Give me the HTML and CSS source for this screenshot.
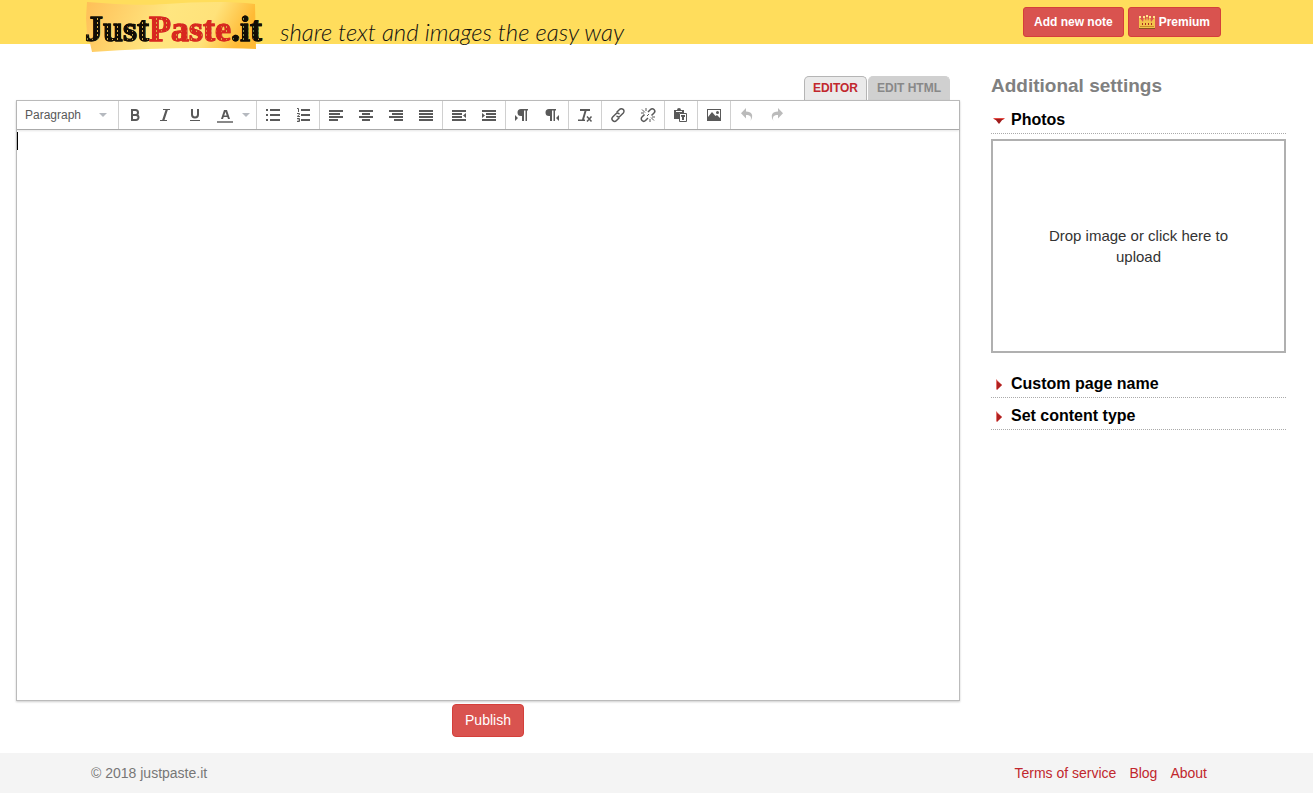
FILE: index.html
```html
<!DOCTYPE html>
<html lang="en">

<head>
    <meta charset="UTF-8">
    <meta name="viewport" content="width=device-width, initial-scale=1.0">
    <title>JustPaste.it</title>
    <link rel="stylesheet" href="styles.css">
</head>

<body>
    <header class="top">
        <div class="container top-inner">
            <a href="#" class="logo">
                <svg class="logo-paper" viewBox="0 0 170 50" aria-hidden="true">
                    <defs>
                        <linearGradient id="paper" x1="0" x2="1" y1="0" y2="0.15">
                            <stop offset="0" stop-color="#ffbf57" />
                            <stop offset="0.5" stop-color="#ffe680" />
                            <stop offset="0.78" stop-color="#ffe27a" />
                            <stop offset="1" stop-color="#ffba35" />
                        </linearGradient>
                    </defs>
                    <path fill="url(#paper)" d="M1 0C30 2 50 4 80 2C110 0 140-1 169 2L170 47C120 45 60 46 6 50L4 41L1 32L0 16Z" />
                </svg>
                <span class="logo-text"><span class="logo-black">Just</span><span class="logo-red">Paste</span><span class="logo-black">.it</span></span>
            </a>
            <span class="tagline">share text and images the easy way</span>
            <nav class="top-buttons">
                <button type="button" class="btn btn-small">Add new note</button>
                <button type="button" class="btn btn-small">
                    <svg width="16" height="14" viewBox="0 0 16 14" aria-hidden="true">
                        <path fill="#f3c34c" d="M0 13V2L4 7L5 2L7 6L8 1L9 6L11 2L12 7L16 2V13Z" />
                        <path fill="#ffe58b" d="M0 1h2v2H0zM4 1h2v2H4zM7 0h2v2H7zM10 1h2v2h-2zM14 1h2v2h-2z" />
                        <path fill="#a92c22" d="M3 8h1v2H3zM6 8h1v2H6zM9 8h1v2H9zM12 8h1v2h-1z" />
                        <path fill="#c98a2b" d="M1 11h14v1H1z" />
                        <path fill="#8a541c" d="M0 13h16v1H0z" />
                    </svg>
                    Premium
                </button>
            </nav>
        </div>
    </header>

    <main class="page">
        <section class="editor-col">
            <div class="tabs">
                <button type="button" class="tab active">EDITOR</button>
                <button type="button" class="tab">EDIT HTML</button>
            </div>

            <div class="editor">
                <div class="toolbar">
                    <div class="group format">
                        <select aria-label="Format">
                            <option>Paragraph</option>
                            <option>Heading 1</option>
                            <option>Heading 2</option>
                        </select>
                        <span class="caret"></span>
                    </div>
                    <div class="group">
                        <button type="button" aria-label="Bold">
                            <svg viewBox="0 0 16 16"><path fill="none" stroke="currentColor" stroke-width="2" d="M5 3h3.500a2.500 2.500 0 0 1 0 5H5zM5 8h4a2.500 2.500 0 0 1 0 5H5z" /></svg>
                        </button>
                        <button type="button" aria-label="Italic">
                            <svg viewBox="0 0 16 16"><path d="M6 2h7v1h-2.200L7.500 13H10v1H3v-1h2.200L8.500 3H6z" /></svg>
                        </button>
                        <button type="button" aria-label="Underline">
                            <svg viewBox="0 0 16 16"><path fill="none" stroke="currentColor" stroke-width="2" d="M5 2v5.500a3 3 0 0 0 6 0V2" /><path d="M3 13h10v1H3z" /></svg>
                        </button>
                        <button type="button" aria-label="Text color">
                            <svg viewBox="0 0 16 16"><path fill-rule="evenodd" d="M7 3h3l3 9h-2l-.7-2H6.700L6 12H4zM7.200 8.500h2.500L8.500 4.800z" /><path fill="#888" d="M0 14h16v2H0z" /></svg>
                        </button>
                        <button type="button" class="open" aria-label="Choose color"><span class="caret"></span></button>
                    </div>
                    <div class="group">
                        <button type="button" aria-label="Bullet list">
                            <svg viewBox="0 0 16 16"><path d="M1 2h2v2H1zM1 7h2v2H1zM1 12h2v2H1zM5 2h10v2H5zM5 7h10v2H5zM5 12h10v2H5z" /></svg>
                        </button>
                        <button type="button" aria-label="Numbered list">
                            <svg viewBox="0 0 16 16"><path d="M6 2h9v2H6zM6 7h9v2H6zM6 12h9v2H6z" /><path fill="none" stroke="currentColor" d="M2 1.500h1.500V5M2 6.500h2.500v1L2.500 9v.5H5M2 11.500h2.500v3H2M2.500 13h2" /></svg>
                        </button>
                    </div>
                    <div class="group">
                        <button type="button" aria-label="Align left">
                            <svg viewBox="0 0 16 16"><path d="M1 3h14v2H1zM1 6h11v2H1zM1 9h14v2H1zM1 12h9v2H1z" /></svg>
                        </button>
                        <button type="button" aria-label="Align center">
                            <svg viewBox="0 0 16 16"><path d="M1 3h14v2H1zM4 6h8v2H4zM1 9h14v2H1zM4 12h8v2H4z" /></svg>
                        </button>
                        <button type="button" aria-label="Align right">
                            <svg viewBox="0 0 16 16"><path d="M1 3h14v2H1zM4 6h11v2H4zM1 9h14v2H1zM6 12h9v2H6z" /></svg>
                        </button>
                        <button type="button" aria-label="Justify">
                            <svg viewBox="0 0 16 16"><path d="M1 3h14v2H1zM1 6h14v2H1zM1 9h14v2H1zM1 12h14v2H1z" /></svg>
                        </button>
                    </div>
                    <div class="group">
                        <button type="button" aria-label="Decrease indent">
                            <svg viewBox="0 0 16 16"><path d="M1 3h14v2H1zM1 6h10v2H1zM1 9h10v2H1zM1 12h14v2H1zM15 6v5l-3-2.500z" /></svg>
                        </button>
                        <button type="button" aria-label="Increase indent">
                            <svg viewBox="0 0 16 16"><path d="M1 3h14v2H1zM5 6h10v2H5zM5 9h10v2H5zM1 12h14v2H1zM1 6v5l3-2.500z" /></svg>
                        </button>
                    </div>
                    <div class="group">
                        <button type="button" aria-label="Left to right">
                            <svg viewBox="0 0 16 16"><path d="M7 2h7v1.500h-1V14h-1.500V3.500H10V14H8V9H7a3.500 3.500 0 0 1 0-7zM1 8v6l3-3z" /></svg>
                        </button>
                        <button type="button" aria-label="Right to left">
                            <svg viewBox="0 0 16 16"><path d="M5 2h7v1.500h-1V14H9.500V3.500H8V14H6V9H5a3.500 3.500 0 0 1 0-7zM15 8v6l-3-3z" /></svg>
                        </button>
                    </div>
                    <div class="group">
                        <button type="button" aria-label="Clear formatting">
                            <svg viewBox="0 0 16 16"><path d="M3 2h10v2H9.500L7 12.500H5L7.500 4H3zM1 12.500h7V14H1z" /><path fill="none" stroke="currentColor" stroke-width="1.500" d="M10 9.500l4.500 5M14.500 9.500l-4.500 5" /></svg>
                        </button>
                    </div>
                    <div class="group">
                        <button type="button" aria-label="Insert link">
                            <svg viewBox="0 0 16 16"><g fill="none" stroke="currentColor" stroke-width="1.500" stroke-linecap="round"><path d="M7 5l2.500-2.500a2.300 2.300 0 0 1 3.800 3.500L10 9.300a2.300 2.300 0 0 1-3 0" /><path d="M9 11l-2.500 2.500a2.300 2.300 0 0 1-3.800-3.500L6 6.700a2.300 2.300 0 0 1 3 0" /></g></svg>
                        </button>
                        <button type="button" aria-label="Remove link">
                            <svg viewBox="0 0 16 16"><g fill="none" stroke="currentColor" stroke-width="1.500"><path d="M8 5l2.500-2.500a2.300 2.300 0 0 1 3.500 3.500L11.500 8.500M8 11l-2.500 2.500A2.300 2.300 0 0 1 2 10L4.500 7.500" /><path stroke-width="1" d="M6 1v3M2 2.500l3 3M1 6h3M10 12v3M11 10.500l3 3M12 10h3M7 9l2-2" /></g></svg>
                        </button>
                    </div>
                    <div class="group">
                        <button type="button" aria-label="Paste as text">
                            <svg viewBox="0 0 16 16"><path d="M1 3h3a2 2 0 0 1 4 0h3v3H6v6H1z" /><path fill="#fff" d="M3 4h6v1H3z" /><path fill="#fff" stroke="currentColor" d="M6.500 6.500h7v8h-7z" /><path d="M8 8h4v2h-1V9.500V13H9V9.500L8 10z" /></svg>
                        </button>
                    </div>
                    <div class="group">
                        <button type="button" aria-label="Insert image">
                            <svg viewBox="0 0 16 16"><path fill-rule="evenodd" d="M1 2h14v12H1zM2 3v10h12V3z" /><path d="M2 13v-3l4-5 3.500 4L11 8l3 3v2z" /><circle cx="11.500" cy="5.500" r="1.500" /></svg>
                        </button>
                    </div>
                    <div class="group">
                        <button type="button" aria-label="Undo" disabled>
                            <svg viewBox="0 0 16 16"><path d="M7 1v3.500c6 0 8 4 4.500 9.500C13 9.500 11 8 7 8v3.500L2 6.200z" /></svg>
                        </button>
                        <button type="button" aria-label="Redo" disabled>
                            <svg viewBox="0 0 16 16"><path d="M9 1v3.500c-6 0-8 4-4.500 9.500C3 9.500 5 8 9 8v3.500l5-5.300z" /></svg>
                        </button>
                    </div>
                </div>
                <textarea class="content" aria-label="Note content"></textarea>
            </div>

            <div class="publish">
                <button type="submit" class="btn">Publish</button>
            </div>
        </section>

        <aside class="settings">
            <h2>Additional settings</h2>
            <details open>
                <summary>
                    <svg width="16" height="16" viewBox="0 0 16 16" aria-hidden="true"><path fill="#e34b45" d="M2 6h12l-2 2H4z" /><path fill="#a01c1c" d="M4 7h8l-4 5z" /></svg>
                    Photos
                </summary>
                <label class="dropzone">
                    <input type="file" accept="image/*">
                    <span>Drop image or click here to upload</span>
                </label>
            </details>
            <details>
                <summary>
                    <svg width="16" height="16" viewBox="0 0 16 16" aria-hidden="true"><path fill="#e3716c" d="M5 3l6 6-6 5z" /><path fill="#b02020" d="M6 5l5 4-5 5z" /></svg>
                    Custom page name
                </summary>
            </details>
            <details>
                <summary>
                    <svg width="16" height="16" viewBox="0 0 16 16" aria-hidden="true"><path fill="#e3716c" d="M5 3l6 6-6 5z" /><path fill="#b02020" d="M6 5l5 4-5 5z" /></svg>
                    Set content type
                </summary>
            </details>
        </aside>
    </main>

    <footer class="bottom">
        <div class="container bottom-inner">
            <span>© 2018 justpaste.it</span>
            <nav class="links">
                <a href="#">Terms of service</a>
                <a href="#">Blog</a>
                <a href="#">About</a>
            </nav>
        </div>
    </footer>
</body>

</html>
```
FILE: styles.css
```css
* {
    box-sizing: border-box;
}

body {
    margin: 0;
    min-height: 100vh;
    display: flex;
    flex-direction: column;
    font-family: "Liberation Sans", Arial, sans-serif;
    font-size: 14px;
    line-height: 20px;
    color: #333;
    background-color: #fff;
}

button,
select,
textarea {
    font-family: inherit;
}

.container {
    width: 100%;
    max-width: 1141px;
    margin: 0 auto;
}

/* header */
.top {
    height: 44px;
    background-color: #ffdd5c;
}

.top-inner {
    display: flex;
    align-items: flex-start;
    padding-right: 6px;
}

.logo {
    position: relative;
    flex: none;
    width: 176px;
    padding-top: 7px;
    margin-right: 18px;
    text-decoration: none;
}

.logo-paper {
    position: absolute;
    top: 2px;
    left: 0;
    width: 170px;
    height: 50px;
}

.logo-text {
    position: relative;
    display: block;
    margin-left: -1px;
    font-family: "Liberation Serif", "Times New Roman", serif;
    font-size: 36px;
    font-weight: bold;
    line-height: 44px;
    white-space: nowrap;
}

/* worn print: paper coloured specks inside the letters */
.logo-black,
.logo-red {
    background-color: #120d05;
    background-image: radial-gradient(circle, #d9a944 1px, transparent 1px);
    background-size: 5px 4px;
    -webkit-background-clip: text;
    background-clip: text;
    color: transparent;
    -webkit-text-stroke: 1px #120d05;
}

.logo-red {
    background-color: #d8271f;
    -webkit-text-stroke-color: #d8271f;
}

.tagline {
    padding-top: 18px;
    font-family: Lato, "Liberation Sans", sans-serif;
    font-size: 24px;
    font-style: italic;
    font-weight: 300;
    line-height: 28px;
    white-space: nowrap;
    color: #111;
}

.top-buttons {
    display: flex;
    gap: 4px;
    margin-left: auto;
    padding-top: 7px;
}

.btn {
    display: inline-flex;
    align-items: center;
    gap: 4px;
    padding: 6px 12px;
    border: 1px solid #d43f3a;
    border-radius: 4px;
    background-color: #d9534f;
    color: #fff;
    font-size: 14px;
    line-height: 19px;
    cursor: pointer;
}

.btn:hover {
    background-color: #c9302c;
}

.btn-small {
    padding: 5px 10px;
    border-radius: 3px;
    font-size: 12px;
    font-weight: bold;
    line-height: 18px;
}

/* main */
.page {
    flex: 1;
    display: grid;
    grid-template-columns: minmax(0, 1fr) 295px;
    gap: 31px;
    padding: 32px 27px 16px 16px;
}

.editor-col {
    display: flex;
    flex-direction: column;
}

.tabs {
    display: flex;
    justify-content: flex-end;
    gap: 1px;
    padding-right: 10px;
}

.tab {
    height: 24px;
    padding: 0 8px 2px;
    border: 1px solid #d0d0d0;
    border-bottom: 0;
    border-radius: 5px 5px 0 0;
    background-color: #d0d0d0;
    color: #888;
    font-size: 12px;
    font-weight: bold;
    cursor: pointer;
}

.tab.active {
    border-color: #b5b5b5;
    background-color: #eaeaea;
    color: #c1272d;
}

.editor {
    flex: 1;
    display: flex;
    flex-direction: column;
    border: 1px solid #bbb;
    box-shadow: 0 1px 2px rgba(0, 0, 0, 0.2);
}

.toolbar {
    display: flex;
    height: 29px;
    border-bottom: 1px solid #aaa;
    box-shadow: 0 1px 2px rgba(0, 0, 0, 0.1);
}

.group {
    display: flex;
    align-items: center;
    padding: 0 1px;
    border-left: 1px solid #d0d0d0;
}

.group:last-child {
    padding-right: 0;
}

.group button {
    display: flex;
    align-items: center;
    justify-content: center;
    width: 30px;
    height: 28px;
    padding: 0;
    border: 0;
    background: none;
    color: #595959;
    cursor: pointer;
}

.group button:disabled {
    color: #bbb;
    cursor: default;
}

.group svg {
    width: 16px;
    height: 16px;
    fill: currentColor;
}

.group .open {
    width: 15px;
    padding-right: 4px;
}

.format {
    width: 101px;
    padding: 0 11px 0 8px;
    border-left: 0;
}

.format select {
    flex: 1;
    min-width: 0;
    padding: 0;
    border: 0;
    appearance: none;
    background: none;
    color: #595959;
    font-size: 12px;
}

.caret {
    border: 4px solid transparent;
    border-top-color: #b5b9bf;
    border-bottom: 0;
}

/* the text cursor is drawn at the first line until the field is used */
.content {
    flex: 1;
    width: 100%;
    min-height: 400px;
    padding: 1px 0;
    border: 0;
    outline: 0;
    resize: none;
    background: linear-gradient(#000, #000) 0 2px / 1px 18px no-repeat;
    font-size: 16px;
    line-height: 19px;
    color: #000;
}

.content:focus {
    background: none;
}

.publish {
    display: flex;
    justify-content: center;
    padding-top: 3px;
}

/* sidebar */
.settings h2 {
    margin: 0;
    font-size: 19px;
    line-height: 20px;
    padding-bottom: 6px;
    color: #808080;
}

.settings summary {
    display: flex;
    align-items: center;
    gap: 4px;
    padding: 9px 0 4px;
    border-bottom: 1px dotted #aaa;
    font-size: 16px;
    font-weight: bold;
    line-height: 18px;
    color: #000;
    cursor: pointer;
}

.dropzone {
    display: flex;
    align-items: center;
    justify-content: center;
    min-height: 214px;
    margin: 5px 0 13px;
    padding: 20px 50px;
    border: 2px solid #b0b0b0;
    font-size: 15px;
    line-height: 21px;
    text-align: center;
    cursor: pointer;
}

.dropzone input {
    display: none;
}

/* footer */
.bottom {
    background-color: #f4f4f4;
}

.bottom-inner {
    display: flex;
    justify-content: space-between;
    padding: 10px 20px 10px 5px;
    color: #777;
}

.links {
    display: flex;
    gap: 13px;
}

.links a {
    color: #c1272d;
    text-decoration: none;
}
```
